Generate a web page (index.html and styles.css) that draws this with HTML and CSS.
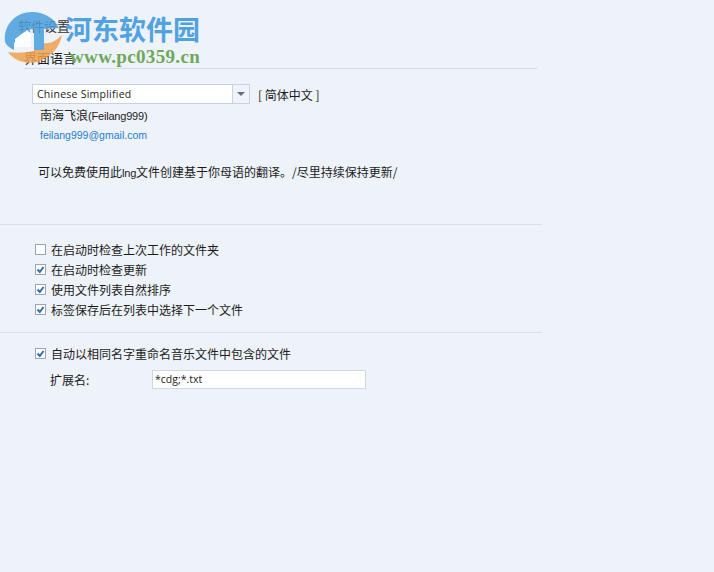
FILE: index.html
```html
<!DOCTYPE html>
<html lang="zh">
<head>
    <meta charset="UTF-8">
    <title>软件设置</title>
    <link rel="stylesheet" href="styles.css">
</head>
<body>
    <div class="page">
        <h2 class="page-title">软件设置</h2>

        <!-- 界面语言 -->
        <h3 class="group-title">界面语言</h3>
        <div class="lang-section">
            <div class="lang-row">
                <div class="combo">
                    <span class="combo-text">Chinese Simplified</span>
                    <span class="combo-btn"><span class="combo-arrow"></span></span>
                </div>
                <span class="lang-name">[ 简体中文 ]</span>
            </div>
            <div class="author">南海飞浪<span class="latin">(Feilang999)</span></div>
            <div class="mail">feilang999@gmail.com</div>
            <p class="note">可以免费使用此<span class="latin">lng</span>文件创建基于你母语的翻译。/尽里持续保持更新/</p>
        </div>

        <!-- 启动选项 -->
        <div class="options first">
            <label class="check-row"><span class="check"></span>在启动时检查上次工作的文件夹</label>
            <label class="check-row"><span class="check on"><svg viewBox="0 0 9 9"><path d="M1.5 4.5 3.8 7 7.5 2"/></svg></span>在启动时检查更新</label>
            <label class="check-row"><span class="check on"><svg viewBox="0 0 9 9"><path d="M1.5 4.5 3.8 7 7.5 2"/></svg></span>使用文件列表自然排序</label>
            <label class="check-row"><span class="check on"><svg viewBox="0 0 9 9"><path d="M1.5 4.5 3.8 7 7.5 2"/></svg></span>标签保存后在列表中选择下一个文件</label>
        </div>

        <!-- 音乐文件 -->
        <div class="options second">
            <label class="check-row"><span class="check on"><svg viewBox="0 0 9 9"><path d="M1.5 4.5 3.8 7 7.5 2"/></svg></span>自动以相同名字重命名音乐文件中包含的文件</label>
            <div class="ext-row">
                <span class="ext-label">扩展名:</span>
                <div class="ext-input">*cdg;*.txt</div>
            </div>
        </div>
    </div>

    <!-- 水印 -->
    <div class="watermark">
        <svg class="wm-logo" viewBox="0 0 70 70">
            <path class="wm-orange" d="M8 52C15 62 30 66 42 60 53 55 60 46 62 35 56 41 50 44 44 43V50H34V51C24 53 15 53 8 52Z"/>
            <path class="wm-blue" d="M5 42C3 26 15 12 32 12 45 12 55 19 59 28L44 29V50H34V30L31 29 14 43V50C10 48 7 46 5 42Z"/>
            <path class="wm-white" d="M15 47V39L27 30 31 33V47Z"/>
        </svg>
        <div class="wm-name">河东软件园</div>
        <div class="wm-url">www.pc0359.cn</div>
    </div>
</body>
</html>
```
FILE: styles.css
```css
html, body {
    margin: 0;
    height: 100%;
}
body {
    background: #eef2f9;
    color: #1c1c1c;
    font-family: "Noto Sans CJK SC", "Liberation Sans", sans-serif;
    font-size: 12px;
    overflow: hidden;
    position: relative;
}
.page {
    padding: 17px 0 0 0;
}
.page-title {
    margin: 0 0 0 18px;
    font-size: 13px;
    font-weight: normal;
    line-height: 18px;
    color: #333;
}
.group-title {
    margin: 14px 177px 0 24px;
    padding-bottom: 1px;
    font-size: 13px;
    font-weight: normal;
    line-height: 18px;
    border-bottom: 1px solid #d5dce9;
}
.lang-section {
    padding: 15px 0 0 32px;
    height: 140px;
    margin-right: 172px;
    border-bottom: 1px solid #d9e0ec;
}
.lang-row {
    display: flex;
    align-items: center;
}
.combo {
    width: 216px;
    height: 18px;
    display: flex;
    background: #fff;
    border: 1px solid #c9d2e2;
}
.combo-text {
    flex: 1;
    padding-left: 4px;
    font-family: "Open Sans", sans-serif;
    font-size: 10.5px;
    line-height: 18px;
    letter-spacing: 0.25px;
}
.combo-btn {
    width: 16px;
    background: #f0f4fa;
    border-left: 1px solid #c9d2e2;
    display: flex;
    align-items: center;
    justify-content: center;
}
.combo-arrow {
    border-top: 4px solid #5f7287;
    border-left: 4px solid transparent;
    border-right: 4px solid transparent;
}
.lang-name {
    margin-left: 8px;
}
.author {
    margin: 2px 0 0 8px;
    line-height: 18px;
}
.latin {
    font-family: "Liberation Sans", sans-serif;
    font-size: 11px;
    letter-spacing: -0.2px;
}
.mail {
    margin: 1px 0 0 8px;
    font-family: "Liberation Sans", sans-serif;
    font-size: 10.5px;
    line-height: 18px;
    color: #1b7fd1;
}
.note {
    margin: 19px 0 0 6px;
    line-height: 18px;
}
.options {
    margin-right: 172px;
    padding-left: 35px;
}
.options.first {
    padding-top: 14px;
    padding-bottom: 13px;
    border-bottom: 1px solid #d9e0ec;
}
.options.second {
    padding-top: 10px;
}
.check-row {
    display: flex;
    align-items: center;
    height: 20px;
}
.check {
    width: 9px;
    height: 9px;
    margin-right: 5px;
    background: #fff;
    border: 1px solid #98a5b6;
    display: flex;
}
.check svg {
    width: 100%;
    height: 100%;
    fill: none;
    stroke: #2f6ea5;
    stroke-width: 2;
}
.ext-row {
    display: flex;
    align-items: center;
    margin-top: 7px;
}
.ext-label {
    width: 102px;
    padding-left: 15px;
}
.ext-input {
    width: 210px;
    height: 17px;
    padding-left: 2px;
    background: #fff;
    border: 1px solid #cfd7e5;
    font-family: "Open Sans", sans-serif;
    font-size: 10.5px;
    line-height: 17px;
}

/* watermark over the top left corner */
.watermark {
    position: absolute;
    left: 0;
    top: 0;
    width: 210px;
    height: 70px;
    pointer-events: none;
}
.wm-logo {
    position: absolute;
    left: 0;
    top: 0;
    width: 70px;
    height: 70px;
    opacity: 0.85;
}
.wm-orange { fill: #f0a24e; }
.wm-blue { fill: #4a9fdc; }
.wm-white { fill: #fff; }
.wm-name {
    position: absolute;
    left: 65px;
    top: 12px;
    font-family: "Noto Sans CJK SC", sans-serif;
    font-size: 27px;
    font-weight: 700;
    line-height: 34px;
    color: #51a2e2;
    white-space: nowrap;
}
.wm-url {
    position: absolute;
    left: 70px;
    top: 46px;
    font-family: "Liberation Serif", serif;
    font-size: 19px;
    font-weight: 700;
    line-height: 22px;
    letter-spacing: 0.35px;
    color: #6ea85a;
    white-space: nowrap;
}
```
